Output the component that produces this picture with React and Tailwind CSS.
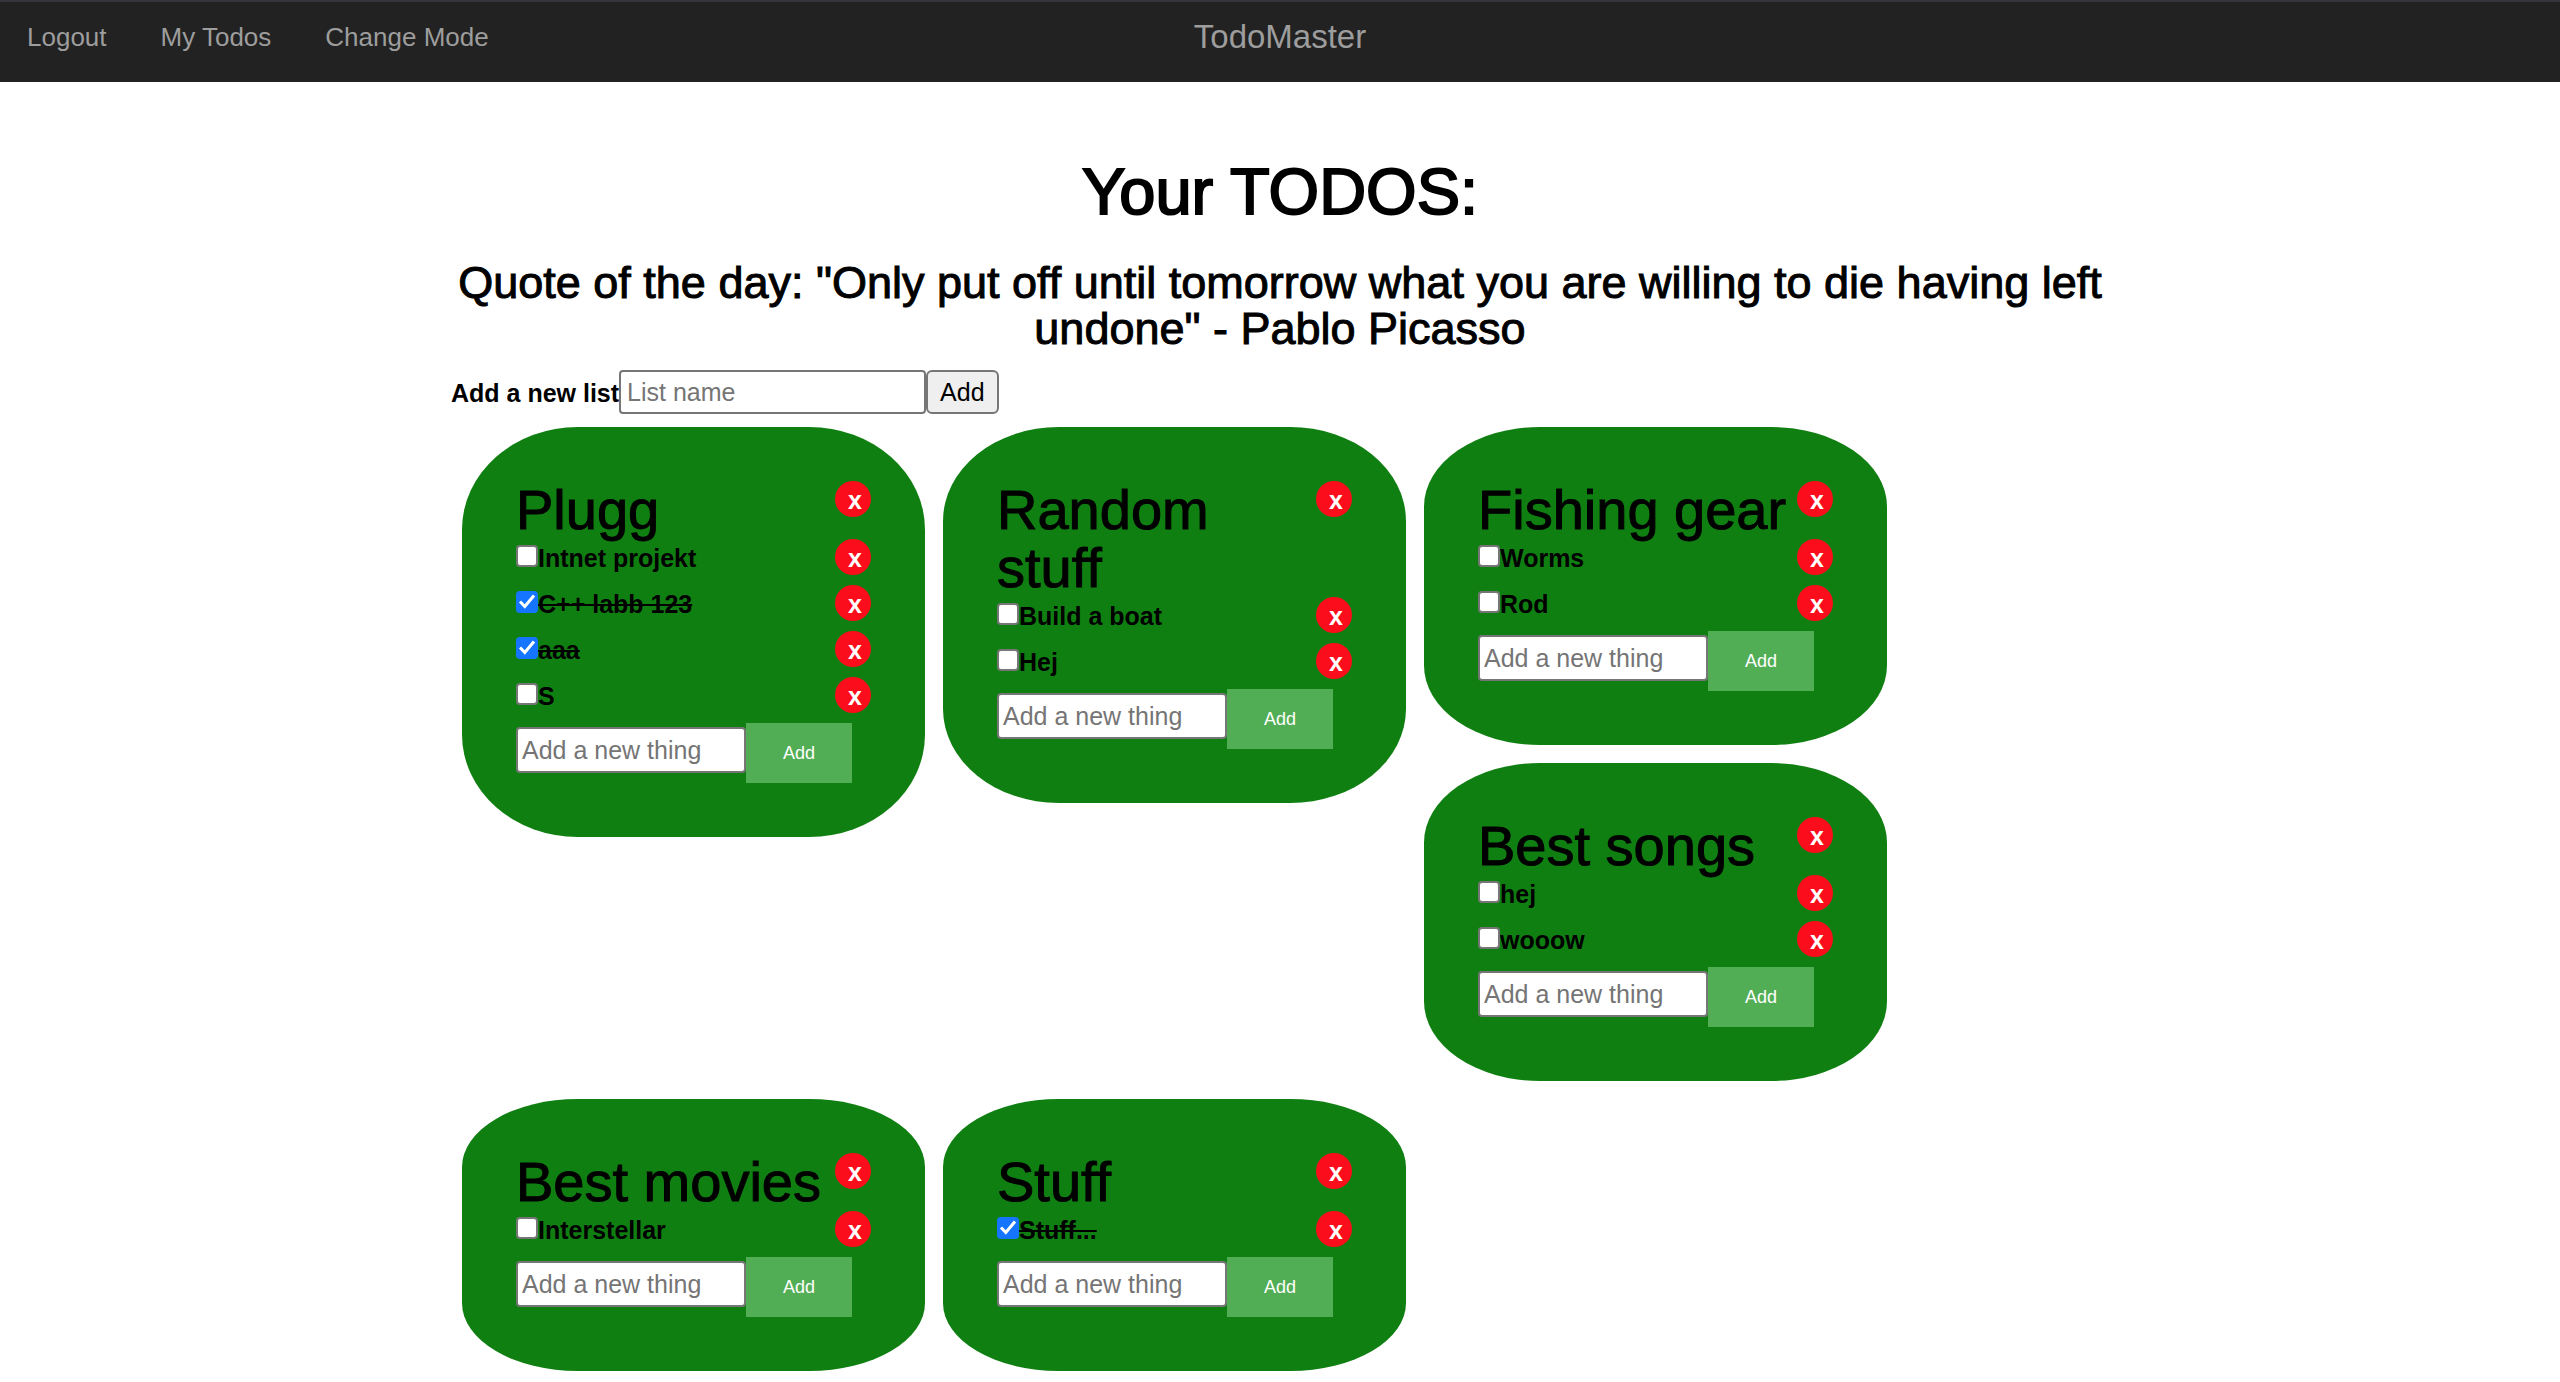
import React, { useState } from "react";

const initialLists = {
  plugg: {
    title: "Plugg",
    items: [
      { text: "Intnet projekt", done: false },
      { text: "C++ labb 123", done: true },
      { text: "aaa", done: true },
      { text: "S", done: false },
    ],
  },
  random: {
    title: "Random stuff",
    items: [
      { text: "Build a boat", done: false },
      { text: "Hej", done: false },
    ],
  },
  fishing: {
    title: "Fishing gear",
    items: [
      { text: "Worms", done: false },
      { text: "Rod", done: false },
    ],
  },
  songs: {
    title: "Best songs",
    items: [
      { text: "hej", done: false },
      { text: "wooow", done: false },
    ],
  },
  movies: {
    title: "Best movies",
    items: [{ text: "Interstellar", done: false }],
  },
  stuff: {
    title: "Stuff",
    items: [{ text: "Stuff...", done: true }],
  },
};

function NavBar() {
  const links = ["Logout", "My Todos", "Change Mode"];
  return (
    <nav className="grid h-[82px] grid-cols-[1fr_auto_1fr] items-start border-t-2 border-[#34363c] bg-[#222222] pt-[15px] text-[#9d9d9d]">
      <ul className="flex">
        {links.map((label) => (
          <li key={label}>
            <a href="#" className="block px-[27px] text-[26px] leading-10">
              {label}
            </a>
          </li>
        ))}
      </ul>
      <a href="#" className="text-[33px] leading-10">
        TodoMaster
      </a>
    </nav>
  );
}

function RemoveButton({ label }) {
  return (
    <button
      type="button"
      aria-label={label}
      className="flex size-9 shrink-0 items-center justify-center rounded-full bg-[#fc0d1b] pt-0.5 pl-1 text-[25px] leading-8 font-bold text-white"
    >
      x
    </button>
  );
}

function TodoItem({ id, item }) {
  const [done, setDone] = useState(item.done);
  return (
    <li className="flex h-[46px] items-start justify-between">
      <div className="flex items-start">
        <span className="relative mt-1.5 block size-[22px] shrink-0">
          <input
            id={id}
            type="checkbox"
            checked={done}
            onChange={() => setDone(!done)}
            className="block size-[22px] appearance-none rounded-sm border-2 border-[#767676] bg-white checked:border-[#1675ff] checked:bg-[#1675ff]"
          />
          {done && (
            <svg
              viewBox="0 0 22 22"
              className="pointer-events-none absolute inset-0 size-[22px]"
              fill="none"
              stroke="white"
              strokeWidth="3"
              aria-hidden="true"
            >
              <path d="M4 10.5 L8.8 15.5 L18 4.5" />
            </svg>
          )}
        </span>
        <label
          htmlFor={id}
          className={
            done
              ? "text-[25px] leading-[38px] font-bold line-through decoration-2"
              : "text-[25px] leading-[38px] font-bold"
          }
        >
          {item.text}
        </label>
      </div>
      <RemoveButton label={`Remove ${item.text}`} />
    </li>
  );
}

function TodoCard({ id, list }) {
  return (
    <section className="rounded-[25%] bg-[#107f12] p-[54px]">
      <div className="flex items-start justify-between">
        <h3 className="text-[56px] leading-[58px] [-webkit-text-stroke:1px_black]">{list.title}</h3>
        <RemoveButton label={`Remove list ${list.title}`} />
      </div>
      <ul>
        {list.items.map((item, index) => (
          <TodoItem key={item.text} id={`${id}-${index}`} item={item} />
        ))}
      </ul>
      <form className="flex items-start" onSubmit={(e) => e.preventDefault()}>
        <input
          type="text"
          placeholder="Add a new thing"
          aria-label={`Add a new thing to ${list.title}`}
          className="mt-1 h-[46px] w-[230px] rounded-sm border-2 border-[#767676] bg-white px-1 text-[25px] placeholder:text-[#757575]"
        />
        <button type="submit" className="h-[60px] w-[106px] bg-[#51ae55] text-lg text-white">
          Add
        </button>
      </form>
    </section>
  );
}

export default function App() {
  return (
    <div className="min-h-screen bg-white font-['Liberation_Sans',Arial,sans-serif] text-black">
      <NavBar />
      <main className="mx-auto max-w-[1658px] pt-[72px]">
        <h1 className="text-center text-[65px] leading-[76px] [-webkit-text-stroke:2px_black]">Your TODOS:</h1>
        <h2 className="mt-[30px] text-center text-[45px] leading-[46px] [-webkit-text-stroke:1px_black]">
          Quote of the day: "Only put off until tomorrow what you are willing to die having left undone" - Pablo
          Picasso
        </h2>
        <form className="mt-[18px] flex items-center" onSubmit={(e) => e.preventDefault()}>
          <label htmlFor="new-list" className="pt-0.5 text-[25px] leading-9 font-bold">
            Add a new list
          </label>
          <input
            id="new-list"
            type="text"
            placeholder="List name"
            className="h-11 w-[307px] rounded-sm border-2 border-[#767676] bg-white px-1.5 text-[25px] placeholder:text-[#757575]"
          />
          <button
            type="submit"
            className="h-11 rounded-md border-2 border-[#767676] bg-[#efefef] px-3 text-[25px] leading-8"
          >
            Add
          </button>
        </form>
        <div className="mt-[13px] grid grid-cols-[repeat(3,minmax(0,463px))] items-start gap-[18px] pl-[11px]">
          <TodoCard id="plugg" list={initialLists.plugg} />
          <TodoCard id="random" list={initialLists.random} />
          <div className="flex flex-col gap-[18px]">
            <TodoCard id="fishing" list={initialLists.fishing} />
            <TodoCard id="songs" list={initialLists.songs} />
          </div>
          <TodoCard id="movies" list={initialLists.movies} />
          <TodoCard id="stuff" list={initialLists.stuff} />
        </div>
      </main>
    </div>
  );
}
